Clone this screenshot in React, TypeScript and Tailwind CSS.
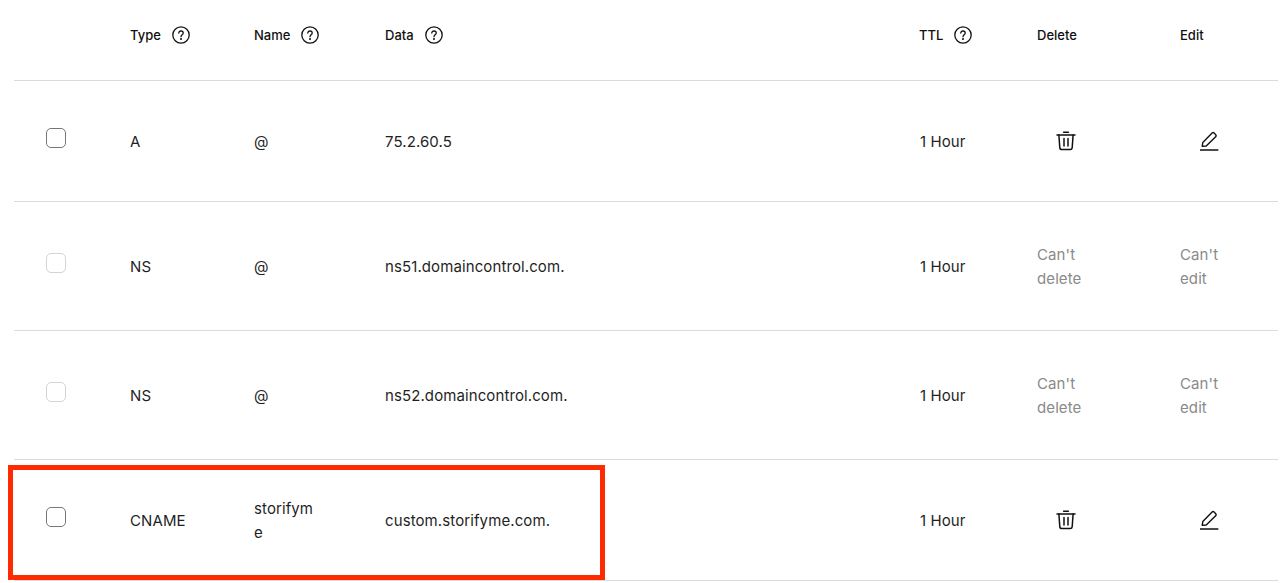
import React from "react";

const rows = [
  { type: "A", name: "@", data: "75.2.60.5", locked: false, height: "h-[120px]" },
  { type: "NS", name: "@", data: "ns51.domaincontrol.com.", locked: true, height: "h-[128px]" },
  { type: "NS", name: "@", data: "ns52.domaincontrol.com.", locked: true, height: "h-[128px]" },
  { type: "CNAME", name: "storifyme", data: "custom.storifyme.com.", locked: false, height: "h-[120px]" },
];

const gridCols = "grid grid-cols-[116px_124px_131px_534px_118px_143px_1fr] items-center";

function HelpIcon() {
  return (
    <svg width="18" height="18" viewBox="0 0 18 18" fill="none" stroke="#111" strokeWidth="1.3" strokeLinecap="round">
      <circle cx="9" cy="9" r="8.2" />
      <path d="M6.8 7.1c0-1.3 1-2.1 2.2-2.1s2.2.8 2.2 2c0 1.8-2.2 1.9-2.2 3.7" />
      <circle cx="9" cy="13" r="0.4" fill="#111" />
    </svg>
  );
}

function TrashIcon() {
  return (
    <svg width="20" height="20" viewBox="0 0 20 20" fill="none" stroke="#111" strokeWidth="1.5" strokeLinecap="round" strokeLinejoin="round">
      <path d="M7.6 1.2h4.8" />
      <path d="M1 4h18" />
      <path d="M2.9 4l.9 12.6c.1 1.2.8 1.9 2 1.9h8.4c1.2 0 1.9-.7 2-1.9L17.1 4" />
      <path d="M8 7.5v7.5M12 7.5v7.5" />
    </svg>
  );
}

function PencilIcon() {
  return (
    <svg width="20" height="20" viewBox="0 0 20 20" fill="none" stroke="#111" strokeWidth="1.4" strokeLinecap="round" strokeLinejoin="round">
      <path d="M2.2 15.2l.6-3.6L12.1 2.1c.6-.6 1.4-.6 2 0l1.6 1.6c.6.6.6 1.4 0 2L6.2 15.1z" />
      <path d="M0 19h17.8" strokeWidth="1.5" />
    </svg>
  );
}

function HeaderCell({ label, help }: { label: string; help?: boolean }) {
  return (
    <div className="flex items-center gap-[11px] text-[13px] font-[450] tracking-normal text-[#111]">
      <span className="pt-[2px]">{label}</span>
      {help && <HelpIcon />}
    </div>
  );
}

export default function App() {
  return (
    <div className="relative h-[583px] w-[1280px] overflow-hidden bg-white pl-[14px] pr-[2px] font-['Inter',sans-serif] text-[15px] tracking-[0.1px] text-[#1f1f1f]">
      <div className={`${gridCols} h-[81px] border-b border-[#d6dde2] pb-[11px]`}>
        <div />
        <HeaderCell label="Type" help />
        <HeaderCell label="Name" help />
        <HeaderCell label="Data" help />
        <HeaderCell label="TTL" help />
        <HeaderCell label="Delete" />
        <HeaderCell label="Edit" />
      </div>

      {rows.map((row) => (
        <div key={row.data} className={`${gridCols} ${row.height} box-content border-b border-[#d6dde2] leading-6`}>
          <div className="pl-[32px]">
            <div className={`mb-[6px] h-5 w-5 rounded-[5px] border ${row.locked ? "border-[#d4d4d4]" : "border-[#767676]"}`} />
          </div>
          <div className="pt-[2px]">{row.type}</div>
          <div className="w-[62px] break-all pt-[2px]">{row.name}</div>
          <div className="pt-[2px]">{row.data}</div>
          <div className="pt-[2px] pl-px">1 Hour</div>
          {row.locked ? (
            <>
              <div className="w-[60px] pt-[2px] text-[#8a8a8a]">Can't delete</div>
              <div className="w-[50px] pt-[2px] text-[#8a8a8a]">Can't edit</div>
            </>
          ) : (
            <>
              <div className="pl-[19px]"><TrashIcon /></div>
              <div className="pl-[20px]"><PencilIcon /></div>
            </>
          )}
        </div>
      ))}

      {/* red highlight drawn over the last row */}
      <div className="absolute left-[8px] top-[465px] h-[115px] w-[597px] border-[5px] border-[#ff2a00]" />
    </div>
  );
}
